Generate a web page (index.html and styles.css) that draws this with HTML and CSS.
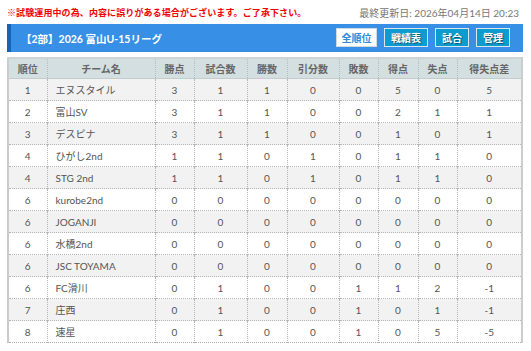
FILE: index.html
```html
<!DOCTYPE html>
<html lang="ja">
<head>
<meta charset="utf-8">
<title>2026 富山U-15リーグ</title>
<link rel="stylesheet" href="styles.css">
</head>
<body>
<div class="page">
  <div class="topline">
    <span class="warn">※試験運用中の為、内容に誤りがある場合がございます。ご了承下さい。</span>
    <span class="updated">最終更新日: 2026年04月14日 20:23</span>
  </div>
  <div class="bar">
    <h1 class="title">【2部】2026 富山U-15リーグ</h1>
    <nav class="btns">
      <a class="btn active">全順位</a>
      <a class="btn">戦績表</a>
      <a class="btn">試合</a>
      <a class="btn">管理</a>
    </nav>
  </div>
  <table class="standings">
    <colgroup>
      <col class="c-rank"><col class="c-team"><col class="c-pts"><col class="c-games"><col class="c-win"><col class="c-draw"><col class="c-lose"><col class="c-gf"><col class="c-ga"><col class="c-gd">
    </colgroup>
    <thead>
      <tr><th>順位</th><th>チーム名</th><th>勝点</th><th>試合数</th><th>勝数</th><th>引分数</th><th>敗数</th><th>得点</th><th>失点</th><th>得失点差</th></tr>
    </thead>
    <tbody>
      <tr><td>1</td><td class="team">エヌスタイル</td><td>3</td><td>1</td><td>1</td><td>0</td><td>0</td><td>5</td><td>0</td><td>5</td></tr>
      <tr><td>2</td><td class="team">富山SV</td><td>3</td><td>1</td><td>1</td><td>0</td><td>0</td><td>2</td><td>1</td><td>1</td></tr>
      <tr><td>3</td><td class="team">デスピナ</td><td>3</td><td>1</td><td>1</td><td>0</td><td>0</td><td>1</td><td>0</td><td>1</td></tr>
      <tr><td>4</td><td class="team">ひがし2nd</td><td>1</td><td>1</td><td>0</td><td>1</td><td>0</td><td>1</td><td>1</td><td>0</td></tr>
      <tr><td>4</td><td class="team">STG 2nd</td><td>1</td><td>1</td><td>0</td><td>1</td><td>0</td><td>1</td><td>1</td><td>0</td></tr>
      <tr><td>6</td><td class="team">kurobe2nd</td><td>0</td><td>0</td><td>0</td><td>0</td><td>0</td><td>0</td><td>0</td><td>0</td></tr>
      <tr><td>6</td><td class="team">JOGANJI</td><td>0</td><td>0</td><td>0</td><td>0</td><td>0</td><td>0</td><td>0</td><td>0</td></tr>
      <tr><td>6</td><td class="team">水橋2nd</td><td>0</td><td>0</td><td>0</td><td>0</td><td>0</td><td>0</td><td>0</td><td>0</td></tr>
      <tr><td>6</td><td class="team">JSC TOYAMA</td><td>0</td><td>0</td><td>0</td><td>0</td><td>0</td><td>0</td><td>0</td><td>0</td></tr>
      <tr><td>6</td><td class="team">FC滑川</td><td>0</td><td>1</td><td>0</td><td>0</td><td>1</td><td>1</td><td>2</td><td>-1</td></tr>
      <tr><td>7</td><td class="team">庄西</td><td>0</td><td>1</td><td>0</td><td>0</td><td>1</td><td>0</td><td>1</td><td>-1</td></tr>
      <tr><td>8</td><td class="team">速星</td><td>0</td><td>1</td><td>0</td><td>0</td><td>1</td><td>0</td><td>5</td><td>-5</td></tr>
    </tbody>
  </table>
</div>
</body>
</html>
```
FILE: styles.css
```css
html, body {
  margin: 0;
  padding: 0;
  background: #fff;
}
body {
  font-family: Lato, "Noto Sans CJK JP", sans-serif;
  color: #555;
}
.page {
  margin: 0 8px 0 7px;
}
.topline {
  height: 24px;
  display: flex;
  justify-content: space-between;
  align-items: center;
  padding-right: 4px;
}
.warn {
  color: #f20000;
  font-weight: bold;
  font-size: 9px;
  letter-spacing: 0.1px;
}
.updated {
  color: #777;
  font-size: 10px;
}
.bar {
  height: 28px;
  background: #3890e6;
  border-left: 4px solid #1763b8;
  display: flex;
  align-items: center;
  justify-content: space-between;
  padding: 0 13px 0 10px;
  box-sizing: border-box;
}
.title {
  margin: 0;
  color: #fff;
  font-size: 10.5px;
  font-weight: bold;
}
.btns {
  display: flex;
  gap: 7px;
  margin-top: -1px;
}
.btn {
  display: flex;
  align-items: center;
  justify-content: center;
  height: 19px;
  padding: 0 6px;
  box-sizing: border-box;
  border: 1px solid #d8e6ee;
  background: #0c9ccf;
  color: #fff;
  font-size: 10px;
  font-weight: bold;
  text-shadow: 1px 1px 1px rgba(0,0,0,0.45);
}
.btn.active {
  background: #fff;
  color: #2f8ad8;
  border-color: #cfdbe3;
  text-shadow: none;
  padding: 0 4.5px;
}
.standings {
  margin-top: 5px;
  width: 100%;
  border-collapse: collapse;
  table-layout: fixed;
  font-size: 10px;
  border-top: 2px solid #cdd5d6;
  border-left: 2px solid #cccccc;
  border-right: 2px solid #cccccc;
  border-bottom: 1px dotted #aaa;
}
.c-rank { width: 39px; }
.c-team { width: 108px; }
.c-pts { width: 39px; }
.c-games { width: 53px; }
.c-win { width: 40px; }
.c-draw { width: 52px; }
.c-lose { width: 39px; }
.c-gf { width: 40px; }
.c-ga { width: 39px; }
.c-gd { width: auto; }
.standings th {
  background: #d3dfe0;
  color: #666;
  font-weight: bold;
  height: 19px;
  padding: 0;
  border-left: 1px dotted #b5bebf;
  border-bottom: 1px solid #c4cccd;
}
.standings td {
  height: 21px;
  padding: 0;
  text-align: center;
  color: #555;
  border-left: 1px dotted #b5b5b5;
  border-top: 1px dotted #b5b5b5;
}
.standings th:first-child,
.standings td:first-child {
  border-left: none;
}
.standings tbody tr:nth-child(odd) td {
  background: #f2f2f2;
}
.standings td.team {
  text-align: left;
  padding-left: 8px;
  white-space: nowrap;
}
```
